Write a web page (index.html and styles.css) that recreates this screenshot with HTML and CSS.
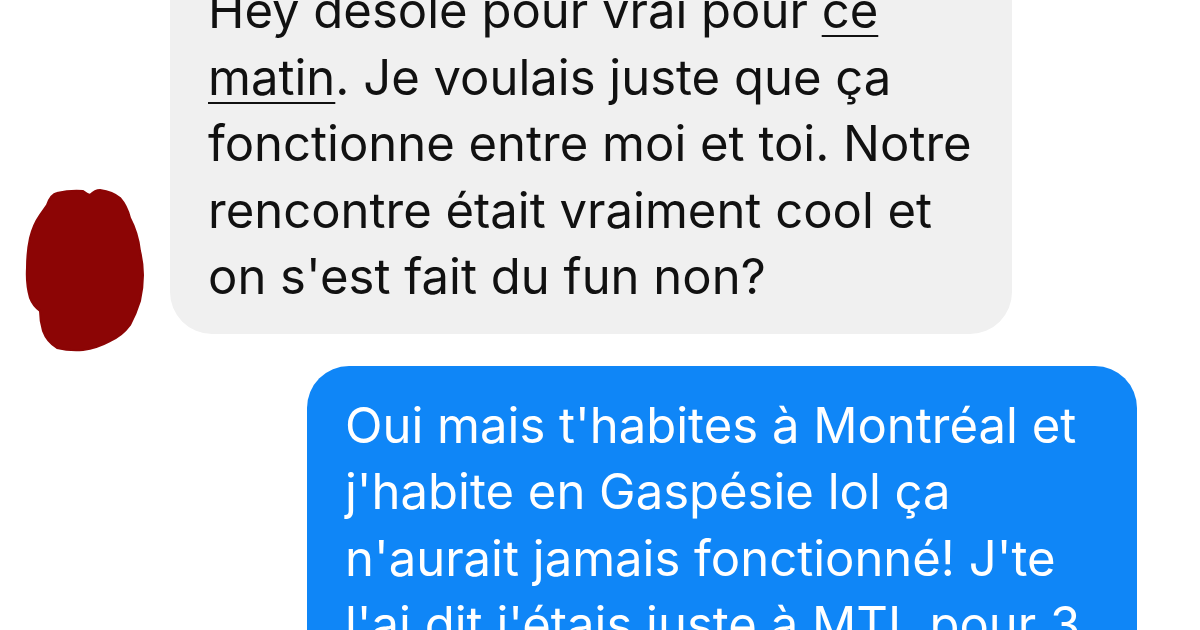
FILE: index.html
```html
<!DOCTYPE html>
<html lang="fr">
<head>
  <meta charset="UTF-8" />
  <title>Conversation</title>
  <link rel="stylesheet" href="styles.css">
</head>
<body>
  <div class="chat">
    <div class="row in">
      <div class="avatar">
        <svg viewBox="0 0 120 165" width="120" height="165">
          <path class="blob" d="M22 17 Q26 6 32 5 Q45 2 58 3 Q62 6 65 7 Q70 2 75 2 Q88 4 95 10 Q102 18 105 30 Q113 45 115 63 Q118 75 118 87 Q118 100 115 113 Q111 126 105 137 Q97 148 85 153 Q72 160 58 162 Q44 163 32 160 Q22 154 18 143 Q15 133 15 123 Q8 118 5 110 Q1 96 2 80 Q2 64 5 50 Q8 37 15 27 Z" />
        </svg>
      </div>
      <div class="bubble grey">
        Hey désolé pour vrai pour <u>ce</u><br>
        <u>matin</u>. Je voulais juste que ça<br>
        fonctionne entre moi et toi. Notre<br>
        rencontre était vraiment cool et<br>
        on s'est fait du fun non?
      </div>
    </div>
    <div class="row out">
      <div class="bubble blue">
        Oui mais t'habites à Montréal et<br>
        j'habite en Gaspésie lol ça<br>
        n'aurait jamais fonctionné! J'te<br>
        l'ai dit j'étais juste à MTL pour 3<br>
        jours
      </div>
    </div>
  </div>
</body>
</html>
```

FILE: styles.css
```css
body {
  margin: 0;
  padding: 0;
  background: #fff;
  font-family: "Inter", "Liberation Sans", Arial, sans-serif;
  overflow: hidden;
  height: 630px;
}
.chat {
  display: flex;
  flex-direction: column;
  gap: 32px;
  margin-top: -44px;
}
.row {
  display: flex;
  align-items: flex-end;
}
.row.in {
  padding-left: 25px;
  gap: 25px;
}
.row.out {
  justify-content: flex-end;
  padding-right: 63px;
}
.avatar {
  width: 120px;
  height: 165px;
  margin-bottom: -19px;
}
.avatar svg { display: block; }
.blob {
  fill: #8c0505;
  stroke: #8c0505;
  stroke-width: 2;
}
.bubble {
  font-size: 49px;
  line-height: 66.5px;
  border-radius: 42px;
  padding: 22px 38px 23px 38px;
  white-space: nowrap;
}
.bubble u {
  text-decoration-thickness: 2px;
  text-underline-offset: 7px;
}
.grey {
  width: 766px;
  background: #f0f0f0;
  color: #111;
}
.blue {
  width: 754px;
  background: #0f86f7;
  color: #fff;
  padding-top: 27px;
}
```
